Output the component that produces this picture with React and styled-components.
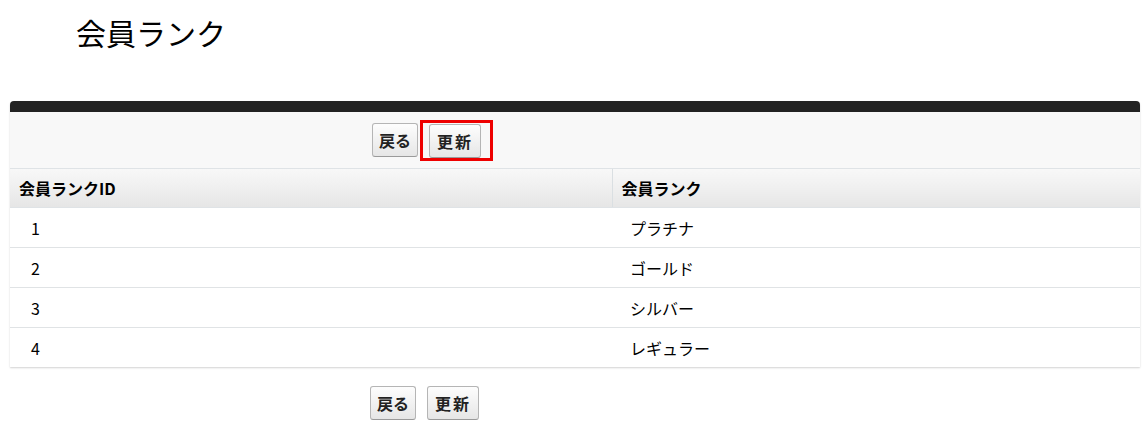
import React from 'react'
import styled, { createGlobalStyle } from 'styled-components'

const ranks = [
  { id: '1', name: 'プラチナ' },
  { id: '2', name: 'ゴールド' },
  { id: '3', name: 'シルバー' },
  { id: '4', name: 'レギュラー' },
]

function App() {
  return (
    <Page>
      <GlobalStyle />
      <Title>会員ランク</Title>

      <Block>
        <TopBar />
        <ButtonBar>
          <Button>戻る</Button>
          <Highlight>
            <Button $wide>更新</Button>
          </Highlight>
        </ButtonBar>

        <Table>
          <colgroup>
            <col style={{ width: 602 }} />
            <col />
          </colgroup>
          <thead>
            <tr>
              <HeadCell>会員ランクID</HeadCell>
              <HeadCell $divider>会員ランク</HeadCell>
            </tr>
          </thead>
          <tbody>
            {ranks.map((r) => (
              <tr key={r.id}>
                <Cell $indent={21}>{r.id}</Cell>
                <Cell $indent={18}>{r.name}</Cell>
              </tr>
            ))}
          </tbody>
        </Table>
      </Block>

      <FooterButtons>
        <Button>戻る</Button>
        <Button $wide>更新</Button>
      </FooterButtons>
    </Page>
  )
}

///////////////////////////////////////////////////////////////////////////////////

const GlobalStyle = createGlobalStyle`
  body {
    margin: 0;
    background: #fff;
    font-family: Arial, "Liberation Sans", "Noto Sans CJK JP", sans-serif;
    color: #000;
  }
`

const Page = styled.div`
  width: 1148px;
  height: 439px;
  overflow: hidden;
`

const Title = styled.h1`
  margin: 0;
  padding: 12px 0 0 76px;
  height: 89px;
  box-sizing: border-box;
  font-size: 30px;
  font-weight: 400;
  line-height: 40px;
  font-family: "Noto Sans CJK JP", sans-serif;
`

///////////////////////////////////////////////////////////////////////////////////

const Block = styled.div`
  margin: 12px 0 0 10px;
  width: 1130px;
  background: #f8f8f8;
  border-radius: 4px 4px 0 0;
  box-shadow: 0 1px 2px rgba(0, 0, 0, 0.18);
`

const TopBar = styled.div`
  height: 11px;
  background: #222;
  border-radius: 4px 4px 0 0;
`

const ButtonBar = styled.div`
  display: flex;
  align-items: center;
  gap: 8px;
  height: 57px;
  padding-left: 362px;
  box-sizing: border-box;
  border-bottom: 1px solid #dfe3e6;
`

const Highlight = styled.div`
  display: flex;
  padding: 1px 9px 0 6px;
  border: 3px solid #ee0000;
  margin-left: -6px;
`

const Button = styled.button`
  height: 34px;
  padding: 0 ${(p) => (p.$wide ? 7 : 6)}px;
  border: 1px solid #b5b5b5;
  border-bottom-color: #9a9a9a;
  border-radius: 3px;
  background: linear-gradient(#fdfdfd, #e6e6e6);
  font-family: "Noto Sans CJK JP", sans-serif;
  font-size: 16px;
  font-weight: 700;
  color: #222;
  letter-spacing: ${(p) => (p.$wide ? 2 : 0)}px;
  cursor: pointer;
`

///////////////////////////////////////////////////////////////////////////////////

const Table = styled.table`
  width: 100%;
  table-layout: fixed;
  border-collapse: collapse;
  background: #fff;
  font-family: "Noto Sans CJK JP", sans-serif;
`

const HeadCell = styled.th`
  height: 38px;
  padding: 0 9px;
  text-align: left;
  font-size: 16px;
  font-weight: 700;
  background: linear-gradient(#f8f8f8, #e6e6e6);
  border-bottom: 1px solid #dfe3e6;
  border-left: ${(p) => (p.$divider ? '1px solid #dadfe2' : 'none')};
`

const Cell = styled.td`
  height: 39px;
  padding: 0 0 0 ${(p) => p.$indent}px;
  font-size: 16px;
  font-weight: 400;
  border-bottom: 1px solid #e0e3e5;
  tr:last-child > & {
    border-bottom: none;
  }
`

///////////////////////////////////////////////////////////////////////////////////

const FooterButtons = styled.div`
  display: flex;
  gap: 11px;
  padding: 19px 0 0 370px;
`

export default App
